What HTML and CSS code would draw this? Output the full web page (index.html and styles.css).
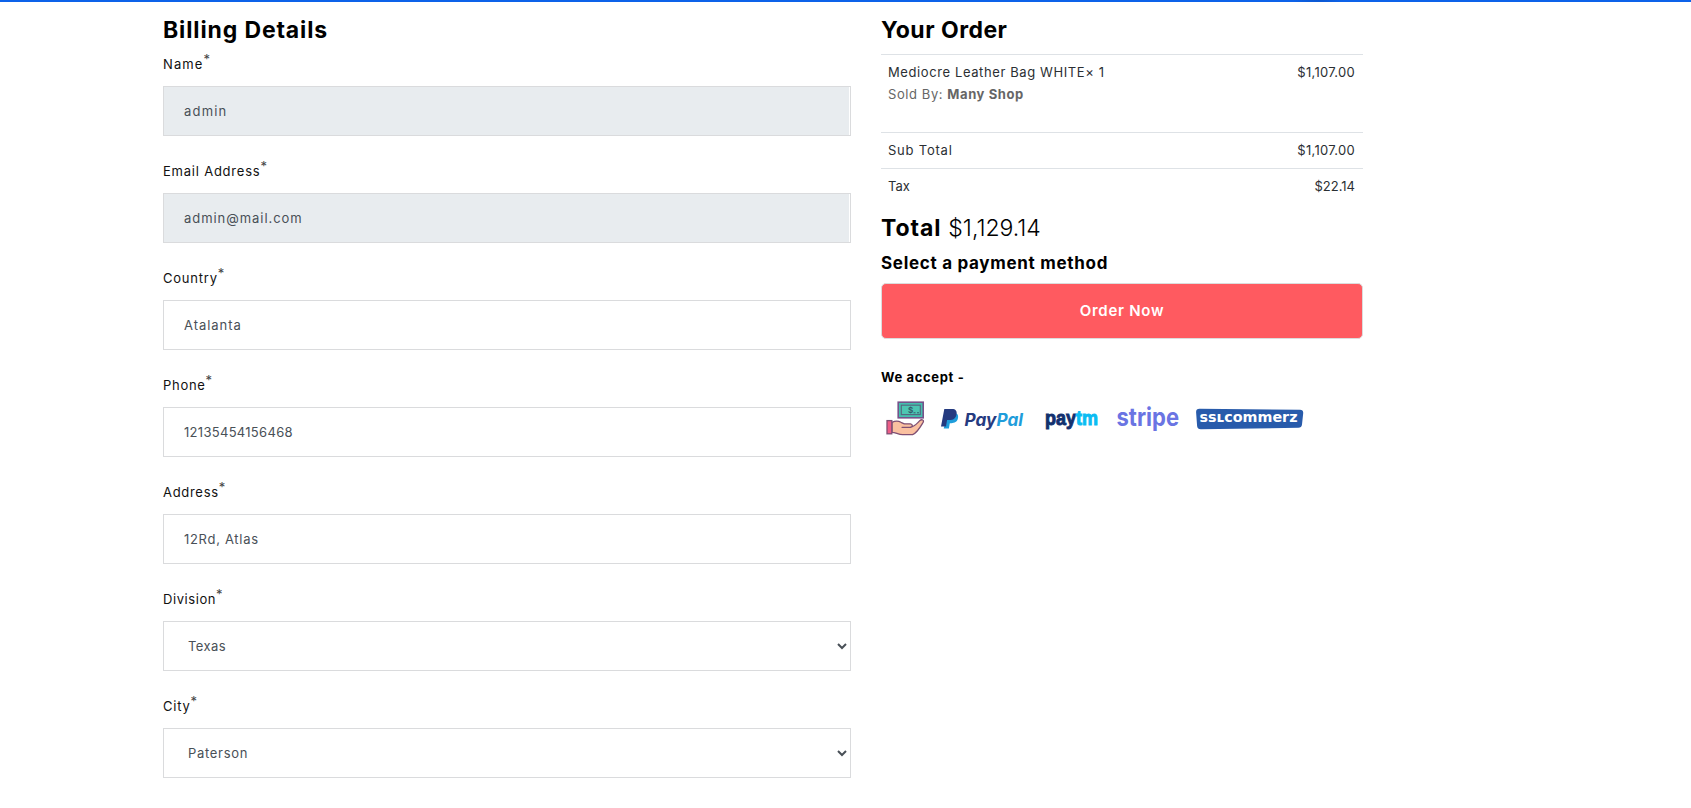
FILE: index.html
```html
<!DOCTYPE html>
<html lang="en">
<head>
<meta charset="utf-8">
<title>Checkout</title>
<link rel="stylesheet" href="styles.css">
</head>
<body>
<div class="topbar"></div>
<main class="checkout">
  <section class="billing">
    <h2 class="title title-billing">Billing Details</h2>
    <div class="field"><label class="ls-11">Name<sup>*</sup></label><div class="locked"><input class="control ls-12" value="admin" disabled></div></div>
    <div class="field"><label class="ls-8">Email Address<sup>*</sup></label><div class="locked"><input class="control ls-10" value="admin@mail.com" disabled></div></div>
    <div class="field"><label class="ls-8">Country<sup>*</sup></label><input class="control ls-10" value="Atalanta"></div>
    <div class="field"><label class="ls-7">Phone<sup>*</sup></label><input class="control ls-3" value="12135454156468"></div>
    <div class="field"><label class="ls-7">Address<sup>*</sup></label><input class="control ls-7" value="12Rd, Atlas"></div>
    <div class="field"><label class="ls-6">Division<sup>*</sup></label><select class="control ls-4"><option>Texas</option></select></div>
    <div class="field"><label class="ls-8">City<sup>*</sup></label><select class="control ls-7"><option>Paterson</option></select></div>
  </section>
  <section class="order">
    <h2 class="title title-order">Your Order</h2>
    <div class="row product">
      <div>
        <div class="item">Mediocre Leather Bag WHITE× 1</div>
        <div class="seller">Sold By: <b>Many Shop</b></div>
      </div>
      <span class="ls-3">$1,107.00</span>
    </div>
    <div class="row"><span class="ls-8">Sub Total</span><span class="ls-3">$1,107.00</span></div>
    <div class="row"><span>Tax</span><span>$22.14</span></div>
    <div class="total"><b>Total</b><span>$1,129.14</span></div>
    <h4 class="method">Select a payment method</h4>
    <button class="submit">Order Now</button>
    <h6 class="accept">We accept -</h6>
    <div class="logos">
      <svg width="50" height="45" viewBox="881 395 50 45">
        <rect x="898.2" y="402.2" width="25" height="15.6" fill="#45bfae" stroke="#76528a" stroke-width="1.6"/>
        <rect x="901.3" y="405.2" width="19" height="9.4" fill="#4dc5b2" stroke="#56657f" stroke-width="1.1"/>
        <text x="908" y="413.3" font-size="8" font-weight="700" fill="#345b6c">$</text>
        <path d="M913.5 412.8h2M917 412.8h2" stroke="#345b6c" stroke-width="1"/>
        <path d="M892 422.300c3-1.500 6-1.800 9 0l3.300 1.500h6c2.600.3 2.700 3 .2 3.500 4-.7 6.500-4 9.200-6.500 2.200-2 4.700-.7 3.400 1.600-2.700 4.500-5.600 10.200-10.500 12.300h-10c-4.300 0-7-2.300-10.600-2.300z" fill="#fac0a0" stroke="#7f4f73" stroke-width="1.300" stroke-linejoin="round"/>
        <path d="M902 427.300h8.500" stroke="#7f4f73" stroke-width="1.200" stroke-linecap="round"/>
        <rect x="887" y="420.600" width="4.800" height="13.200" fill="#ed5d86" stroke="#7f4f73" stroke-width="1.300"/>
      </svg>
      <svg width="104" height="45" viewBox="931 395 104 45">
        <path d="M947.500 413h7.500c3 .5 3.600 3 2.900 5.600-.8 3.500-3.400 4.600-6.500 4.600h-1.600l-.9 5.300h-5.200z" fill="#1f9ddb"/>
        <path d="M944.300 409h7.700c3.600 0 5.200 2 4.500 5.400-.7 4-3.400 5.600-7 5.600h-2.400l-1.100 6.600h-5z" fill="#253b80"/>
        <text class="brand-paypal" x="964.500" y="425.500" textLength="58.500" lengthAdjust="spacingAndGlyphs"><tspan fill="#253b80">Pay</tspan><tspan fill="#1f9ddb">Pal</tspan></text>
      </svg>
      <svg width="72" height="45" viewBox="1035 395 72 45">
        <text class="brand-paytm" x="1045" y="424.500" textLength="53" lengthAdjust="spacingAndGlyphs"><tspan fill="#12306e" stroke="#12306e">pay</tspan><tspan fill="#0bbcf3" stroke="#0bbcf3">tm</tspan></text>
      </svg>
      <svg width="80" height="45" viewBox="1107 395 80 45">
        <text class="brand-stripe" x="1116.500" y="425.500" textLength="62.500" lengthAdjust="spacingAndGlyphs">stripe</text>
      </svg>
      <svg width="124" height="45" viewBox="1187 395 124 45">
        <path d="M1199.500 408.800l100.500 1q3.500 0 3.200 3.500l-1.200 11.200q-.4 3.300-3.700 3.300l-97.500 1.400q-3.300 0-3.700-3.300l-1-13.600q-.2-3.500 3.400-3.500z" fill="#285bab"/>
        <text class="brand-ssl" x="1199.500" y="422.300" textLength="98" lengthAdjust="spacingAndGlyphs">ssʟcommerz</text>
      </svg>
    </div>
  </section>
</main>
</body>
</html>
```
FILE: styles.css
```css
* { box-sizing: border-box; }
body { margin: 0; background: #fff; color: #2b2f33; font: 13px/22px Inter, "Open Sans", sans-serif; overflow: hidden; }
.topbar { height: 2px; background: radial-gradient(ellipse 25px 6px at 1318px 0, #0b57cf, #0d62e9); }
.checkout { display: grid; grid-template-columns: 688px 482px; gap: 30px; padding: 11px 0 0 163px; }
.title { margin: 0; height: 35px; font-size: 23px; line-height: 34px; font-weight: 700; color: #000; }
.title-billing { letter-spacing: .87px; }
.title-order { height: 41px; letter-spacing: .48px; }

.field { height: 107px; }
.field label { display: block; height: 38px; line-height: 32px; color: #111; }
.control { display: block; width: 100%; height: 50px; border: 1px solid #dadbdd; border-radius: 0; padding: 0 20px 1px; font: inherit; color: #495057; background: #fff; }
.locked { border: 1px solid #dadbdd; padding-right: 1px; }
.locked .control { height: 48px; border: 0; background: #e8ecef; }
sup { font-size: 13px; line-height: 0; color: #444; letter-spacing: 0; }

.row { display: flex; justify-content: space-between; border-top: 1px solid #dee2e6; height: 36px; padding: 6px 8px 0 7px; }
.product { height: 78px; }
.item { letter-spacing: .6px; }
.seller { color: #666; letter-spacing: .58px; }
.total { display: flex; gap: 7px; height: 41px; padding-top: 7px; font-size: 23px; line-height: 34px; font-weight: 300; color: #000; }
.total b { font-weight: 700; letter-spacing: .9px; }
.method { margin: 0; height: 38px; padding-top: 6px; line-height: 24px; font-size: 17px; font-weight: 700; letter-spacing: .7px; color: #000; }
.submit { display: block; width: 100%; height: 56px; padding: 0 0 2px; font: 600 15px Inter, sans-serif; letter-spacing: .72px; color: #fff; background: #ff5a60; border: 1px solid #dcdcdc; border-radius: 5px; }
.accept { margin: 27px 0 0; height: 29px; font-size: 13px; font-weight: 700; letter-spacing: .64px; color: #000; }
.logos { display: flex; height: 45px; }

.brand-paypal { font: italic 700 17px Inter, sans-serif; }
.brand-paytm { font: 700 21px "Liberation Sans", sans-serif; stroke-width: 1px; }
.brand-stripe { font: 700 25px Inter, sans-serif; fill: #6a74e3; }
.brand-ssl { font: 700 14px "DejaVu Sans", sans-serif; fill: #fff; }

.ls-3 { letter-spacing: .3px; }
.ls-4 { letter-spacing: .4px; }
.ls-6 { letter-spacing: .57px; }
.ls-7 { letter-spacing: .7px; }
.ls-8 { letter-spacing: .78px; }
.ls-10 { letter-spacing: .95px; }
.ls-11 { letter-spacing: 1.1px; }
.ls-12 { letter-spacing: 1.2px; }
```
